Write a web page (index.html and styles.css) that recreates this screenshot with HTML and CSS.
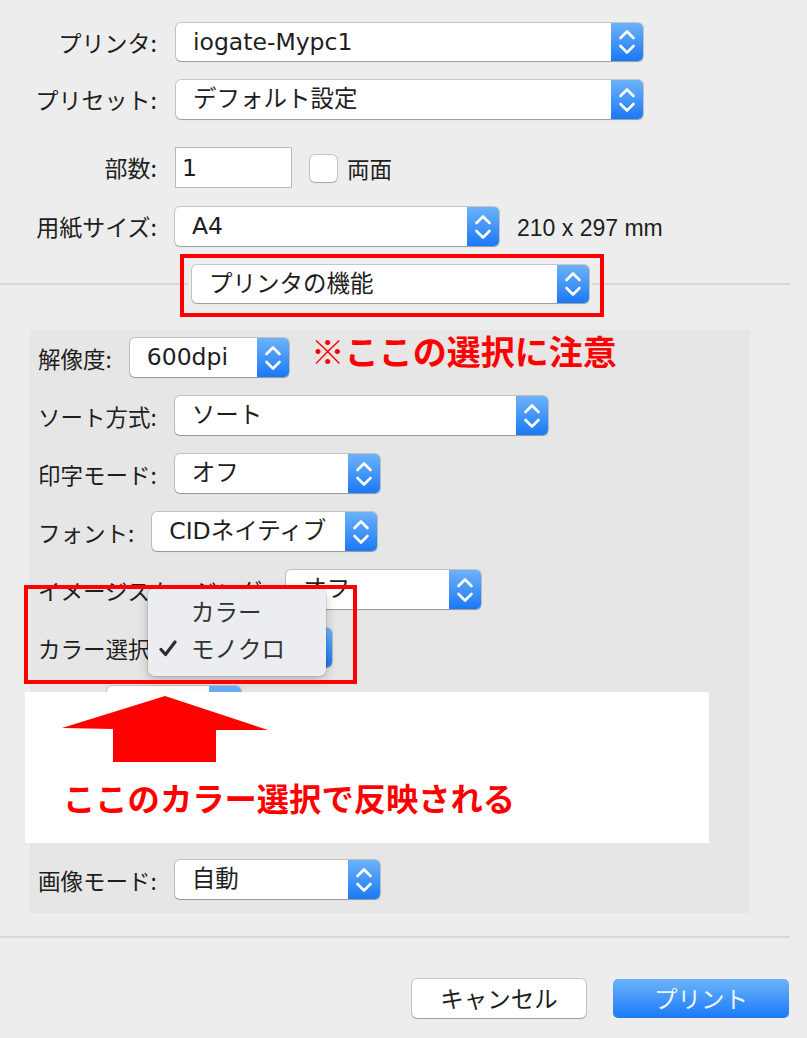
FILE: index.html
```html
<!DOCTYPE html>
<html lang="ja">
<head>
<meta charset="utf-8">
<title>プリント</title>
<link rel="stylesheet" href="styles.css">
</head>
<body>
<div class="page">
  <section class="top">
    <div class="row row-first">
      <span class="lbl">プリンタ:</span>
      <div class="popup w-467"><span class="val">iogate-Mypc1</span><span class="step"><svg viewBox="0 0 32 38" width="32" height="38"><path d="M9.5 15 L16 8.5 L22.5 15 M9.5 23 L16 29.5 L22.5 23"/></svg></span></div>
    </div>
    <div class="row">
      <span class="lbl">プリセット:</span>
      <div class="popup w-467"><span class="val">デフォルト設定</span><span class="step"><svg viewBox="0 0 32 38" width="32" height="38"><path d="M9.5 15 L16 8.5 L22.5 15 M9.5 23 L16 29.5 L22.5 23"/></svg></span></div>
    </div>
    <div class="row row-copies">
      <span class="lbl">部数:</span>
      <div class="num">1</div>
      <span class="check"></span>
      <span class="check-lbl">両面</span>
    </div>
    <div class="row">
      <span class="lbl">用紙サイズ:</span>
      <div class="popup w-324 popup-paper"><span class="val">A4</span><span class="step"><svg viewBox="0 0 32 38" width="32" height="38"><path d="M9.5 15 L16 8.5 L22.5 15 M9.5 23 L16 29.5 L22.5 23"/></svg></span></div>
      <span class="dims">210 x 297 mm</span>
    </div>
    <div class="feature">
      <span class="line line-l"></span>
      <div class="popup w-397 popup-feature"><span class="val">プリンタの機能</span><span class="step"><svg viewBox="0 0 32 38" width="32" height="38"><path d="M9.5 15 L16 8.5 L22.5 15 M9.5 23 L16 29.5 L22.5 23"/></svg></span></div>
      <span class="line line-r"></span>
    </div>
  </section>

  <section class="panel">
    <div class="prow">
      <span class="plbl">解像度:</span>
      <div class="popup w-159"><span class="val">600dpi</span><span class="step"><svg viewBox="0 0 32 38" width="32" height="38"><path d="M9.5 15 L16 8.5 L22.5 15 M9.5 23 L16 29.5 L22.5 23"/></svg></span></div>
      <span class="note">※ここの選択に注意</span>
    </div>
    <div class="prow">
      <span class="plbl">ソート方式:</span>
      <div class="popup w-373"><span class="val">ソート</span><span class="step"><svg viewBox="0 0 32 38" width="32" height="38"><path d="M9.5 15 L16 8.5 L22.5 15 M9.5 23 L16 29.5 L22.5 23"/></svg></span></div>
    </div>
    <div class="prow">
      <span class="plbl">印字モード:</span>
      <div class="popup w-205"><span class="val">オフ</span><span class="step"><svg viewBox="0 0 32 38" width="32" height="38"><path d="M9.5 15 L16 8.5 L22.5 15 M9.5 23 L16 29.5 L22.5 23"/></svg></span></div>
    </div>
    <div class="prow">
      <span class="plbl">フォント:</span>
      <div class="popup w-225"><span class="val">CIDネイティブ</span><span class="step"><svg viewBox="0 0 32 38" width="32" height="38"><path d="M9.5 15 L16 8.5 L22.5 15 M9.5 23 L16 29.5 L22.5 23"/></svg></span></div>
    </div>
    <div class="prow">
      <span class="plbl">イメージスムージング:</span>
      <div class="popup w-195"><span class="val">オフ</span><span class="step"><svg viewBox="0 0 32 38" width="32" height="38"><path d="M9.5 15 L16 8.5 L22.5 15 M9.5 23 L16 29.5 L22.5 23"/></svg></span></div>
    </div>
    <div class="prow">
      <span class="plbl">カラー選択:</span>
      <div class="popup w-157"><span class="val">モノクロ</span><span class="step"><svg viewBox="0 0 32 38" width="32" height="38"><path d="M9.5 15 L16 8.5 L22.5 15 M9.5 23 L16 29.5 L22.5 23"/></svg></span></div>
    </div>
    <div class="prow">
      <span class="plbl plbl-short"></span>
      <div class="popup w-134"><span class="val"></span><span class="step"><svg viewBox="0 0 32 38" width="32" height="38"><path d="M9.5 15 L16 8.5 L22.5 15 M9.5 23 L16 29.5 L22.5 23"/></svg></span></div>
    </div>
    <div class="prow"></div>
    <div class="prow"></div>
    <div class="prow">
      <span class="plbl">画像モード:</span>
      <div class="popup w-205"><span class="val">自動</span><span class="step"><svg viewBox="0 0 32 38" width="32" height="38"><path d="M9.5 15 L16 8.5 L22.5 15 M9.5 23 L16 29.5 L22.5 23"/></svg></span></div>
    </div>
  </section>

  <div class="sep"></div>

  <div class="buttons">
    <button class="btn btn-cancel">キャンセル</button>
    <button class="btn btn-print">プリント</button>
  </div>

  <div class="redbox redbox-feature"></div>

  <div class="menu">
    <div class="mitem"><span class="mcheck"></span><span>カラー</span></div>
    <div class="mitem"><span class="mcheck"><svg viewBox="0 0 18 17" width="18" height="17"><path d="M2 9.5 L6.5 14.5 L16 2"/></svg></span><span>モノクロ</span></div>
  </div>
  <div class="redbox redbox-color"></div>

  <div class="callout">
    <svg class="arrow" viewBox="0 0 250 72" width="250" height="72"><polygon points="140,4 243,38 191,38 191,70 88,70 88,37 37,36"/></svg>
    <p class="callout-text">ここのカラー選択で反映される</p>
  </div>
</div>
</body>
</html>
```

FILE: styles.css
```css
* { box-sizing: border-box; }

html, body {
  margin: 0;
  padding: 0;
}

body {
  background: #ededed;
  color: #1e1e1e;
  font-family: "Noto Sans CJK JP", sans-serif;
  width: 807px;
  height: 1038px;
  overflow: hidden;
}

.page {
  position: relative;
  width: 807px;
  height: 1038px;
}

/* ---------- top form ---------- */
.top {
  padding-top: 23px;
  display: flex;
  flex-direction: column;
  gap: 19px;
}

.row {
  display: flex;
  align-items: center;
  height: 39px;
}

.row-first { height: 38px; }

.row-copies {
  height: 41px;
  margin-top: 9px;
}

.lbl {
  width: 157px;
  text-align: right;
  font-size: 23px;
  line-height: 1;
  margin-right: 19px;
  white-space: nowrap;
}

/* ---------- popup buttons ---------- */
.popup {
  display: flex;
  height: 38px;
  background: #fff;
  border-radius: 5px;
  box-shadow: 0 0 0 1px rgba(0, 0, 0, 0.16), 0 1px 1px rgba(0, 0, 0, 0.22);
  flex: none;
}

.row .popup { height: 100%; }

.popup .val {
  flex: 1;
  padding-left: 17px;
  font-family: "DejaVu Sans", "Noto Sans CJK JP", sans-serif;
  font-size: 23.5px;
  line-height: 38px;
  color: #1e1e1e;
  white-space: nowrap;
  overflow: hidden;
}

.popup .step {
  width: 32px;
  flex: none;
  border-radius: 0 5px 5px 0;
  background: linear-gradient(#6db2f8, #1a79f7);
  display: flex;
  align-items: center;
}

.popup .step svg {
  display: block;
}

.popup .step path {
  fill: none;
  stroke: #fff;
  stroke-width: 2.6;
  stroke-linecap: round;
  stroke-linejoin: round;
}

.w-467 { width: 467px; }
.w-324 { width: 324px; }
.w-397 { width: 397px; }
.w-159 { width: 159px; }
.w-373 { width: 373px; }
.w-205 { width: 205px; }
.w-225 { width: 225px; }
.w-195 { width: 195px; }
.w-157 { width: 157px; }
.w-134 { width: 134px; }

.popup-paper { margin-left: -1px; }

.num {
  width: 117px;
  height: 41px;
  margin-left: -1px;
  background: #fff;
  border: 1px solid #b9b9b9;
  padding-left: 6px;
  font-family: "DejaVu Sans", sans-serif;
  font-size: 23.5px;
  line-height: 40px;
}

.check {
  width: 27px;
  height: 27px;
  margin-left: 18px;
  background: #fff;
  border-radius: 5px;
  box-shadow: 0 0 0 1px rgba(0, 0, 0, 0.18), 0 1px 1px rgba(0, 0, 0, 0.15);
  align-self: center;
  margin-top: 1px;
}

.check-lbl {
  margin-left: 10px;
  font-size: 22.5px;
}

.dims {
  margin-left: 18px;
  font-family: "Liberation Sans", Arial, sans-serif;
  font-size: 23px;
  margin-top: 3px;
}

/* ---------- printer features divider ---------- */
.feature {
  display: flex;
  align-items: center;
  height: 38px;
}

.line {
  height: 2px;
  background: #d7d7d7;
}

.line-l { width: 188px; margin-right: 4px; }
.line-r { width: 198px; margin-left: 3px; }

/* ---------- options panel ---------- */
.panel {
  margin: 27px 0 0 30px;
  width: 720px;
  background: #e6e6e6;
  padding: 8px 0 14px 8px;
  display: flex;
  flex-direction: column;
  gap: 19px;
}

.prow {
  display: flex;
  align-items: center;
  height: 39px;
}

.prow .popup { height: 39px; }
.prow .popup .val { line-height: 39px; }

.plbl {
  font-size: 22.5px;
  margin-right: 18px;
  white-space: nowrap;
}

.plbl-short { width: 51px; }

.note {
  margin-left: 22px;
  align-self: flex-start;
  margin-top: -8px;
  color: #ff0000;
  font-weight: 700;
  font-size: 34px;
  line-height: 42px;
  white-space: nowrap;
}

/* ---------- bottom ---------- */
.sep {
  width: 790px;
  height: 2px;
  background: #d7d7d7;
  margin-top: 23px;
}

.buttons {
  display: flex;
  justify-content: flex-end;
  gap: 27px;
  padding-right: 18px;
  margin-top: 41px;
}

.btn {
  height: 39px;
  border-radius: 5px;
  font-family: "Noto Sans CJK JP", sans-serif;
  font-size: 23.5px;
  line-height: 37px;
  padding: 0;
  border: none;
}

.btn-cancel {
  width: 174px;
  background: #fff;
  color: #1e1e1e;
  box-shadow: 0 0 0 1px rgba(0, 0, 0, 0.16), 0 1px 1px rgba(0, 0, 0, 0.22);
}

.btn-print {
  width: 176px;
  background: linear-gradient(#6db3fa, #1a7af8);
  color: #eef5ff;
}

/* ---------- annotations / overlays ---------- */
.redbox {
  position: absolute;
  border: 4px solid #ff0000;
}

.redbox-feature {
  left: 180px;
  top: 254px;
  width: 424px;
  height: 63px;
}

.redbox-color {
  left: 24px;
  top: 585px;
  width: 333px;
  height: 99px;
}

.menu {
  position: absolute;
  left: 148px;
  top: 588px;
  width: 178px;
  height: 88px;
  background: #ebedf0;
  border-radius: 7px;
  box-shadow: 0 0 0 1px rgba(0, 0, 0, 0.08), 0 4px 12px rgba(0, 0, 0, 0.22);
  padding-top: 4px;
}

.mitem {
  display: flex;
  align-items: center;
  height: 37px;
  padding-left: 11px;
  font-size: 23.5px;
  color: #333;
}

.mcheck {
  width: 32px;
  display: flex;
  align-items: center;
}

.mcheck svg {
  display: block;
  margin-top: 2px;
}

.mcheck path {
  fill: none;
  stroke: #2e2e2e;
  stroke-width: 3.2;
  stroke-linecap: round;
  stroke-linejoin: round;
}

.callout {
  position: absolute;
  left: 25px;
  top: 692px;
  width: 684px;
  height: 151px;
  background: #fff;
}

.arrow {
  display: block;
}

.arrow polygon {
  fill: #ff0000;
}

.callout-text {
  margin: 13px 0 0 38px;
  color: #ff0000;
  font-weight: 700;
  font-size: 32.3px;
  line-height: 40px;
  white-space: nowrap;
}
```
